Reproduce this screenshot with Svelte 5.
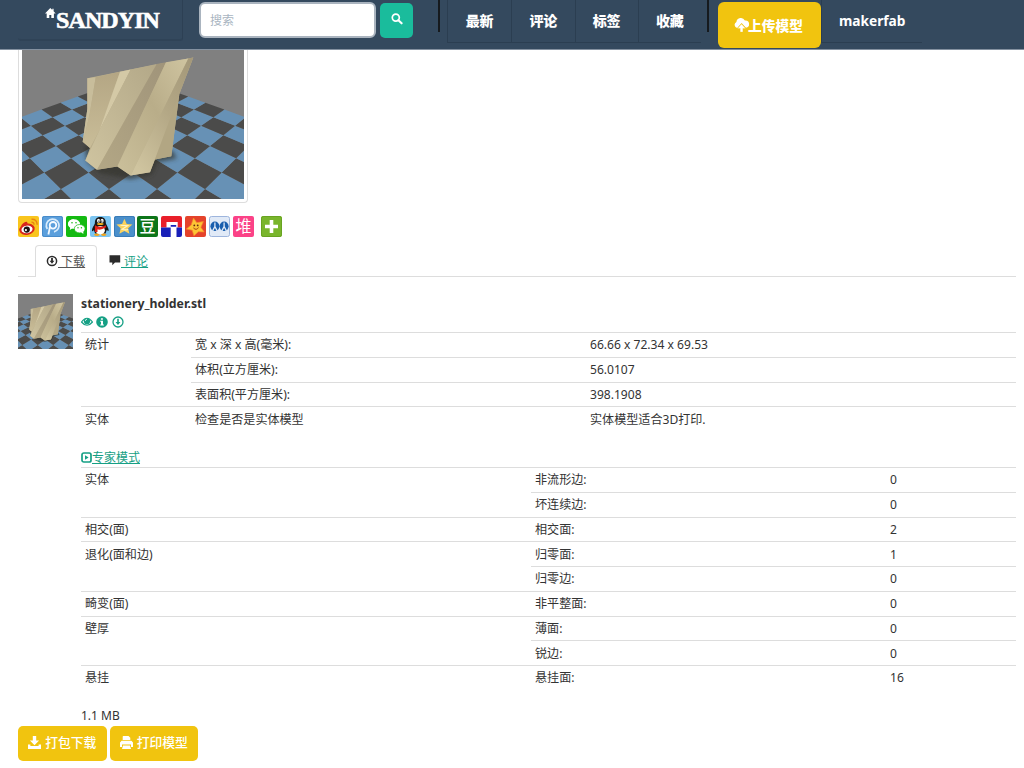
<script>
  const nav = ['最新', '评论', '标签', '收藏'];

  const stats = [
    { label: '统计', rows: [['宽 x 深 x 高(毫米):', '66.66 x 72.34 x 69.53'], ['体积(立方厘米):', '56.0107'], ['表面积(平方厘米):', '398.1908']] },
    { label: '实体', rows: [['检查是否是实体模型', '实体模型适合3D打印.']] }
  ];
  const expert = [
    { label: '实体', rows: [['非流形边:', '0'], ['坏连续边:', '0']] },
    { label: '相交(面)', rows: [['相交面:', '2']] },
    { label: '退化(面和边)', rows: [['归零面:', '1'], ['归零边:', '0']] },
    { label: '畸变(面)', rows: [['非平整面:', '0']] },
    { label: '壁厚', rows: [['薄面:', '0'], ['锐边:', '0']] },
    { label: '悬挂', rows: [['悬挂面:', '16']] }
  ];

  // Checkerboard floor in perspective: rows shrink towards the horizon.
  function project(i, j) {
    const n = i + j - 1;
    const s = 1 / (0.00694 + 0.000571 * n);
    return `${(399 + ((i - j) / 2) * s).toFixed(1)},${(-224 + 4.55 * s).toFixed(1)}`;
  }
  const tiles = [];
  for (let i = -5; i < 7; i++) {
    for (let j = -5; j < 7; j++) {
      if (i + j < -3) continue;
      tiles.push({
        dark: (i + j) % 2 !== 0,
        points: [project(i, j), project(i + 1, j), project(i + 1, j + 1), project(i, j + 1)].join(' ')
      });
    }
  }
</script>

{#snippet scene(viewBox, cls)}
  <svg class={cls} {viewBox} preserveAspectRatio="none">
    <defs>
      <linearGradient id="{cls}-a" x1="0" y1="0" x2="0" y2="1"><stop offset="0" stop-color="#b4a684" /><stop offset="1" stop-color="#c9bd98" /></linearGradient>
      <linearGradient id="{cls}-b" x1="1" y1="0" x2="0" y2="1"><stop offset="0" stop-color="#b3a888" /><stop offset="1" stop-color="#cfc4a0" /></linearGradient>
      <linearGradient id="{cls}-c" x1="1" y1="0" x2="0" y2="1"><stop offset="0" stop-color="#cfc4a0" /><stop offset=".45" stop-color="#b9ad89" /><stop offset="1" stop-color="#cbc09b" /></linearGradient>
      <linearGradient id="{cls}-d" x1="1" y1="0" x2="0" y2="1"><stop offset="0" stop-color="#a0947a" /><stop offset="1" stop-color="#b3a785" /></linearGradient>
      <linearGradient id="{cls}-e" x1=".9" y1="0" x2=".2" y2="1"><stop offset="0" stop-color="#a5997a" /><stop offset=".45" stop-color="#b3a785" /><stop offset="1" stop-color="#cfc49f" /></linearGradient>
      <filter id="{cls}-s"><feGaussianBlur stdDeviation="6" /></filter>
    </defs>
    <rect x="0" y="-60" width="800" height="560" fill="#808080" />
    {#each tiles as t}
      <polygon points={t.points} fill={t.dark ? '#4b4b4a' : '#6791b5'} />
    {/each}
    <polygon points="252,300 262,350 300,384 392,402 455,388 472,352 530,340 520,318" fill="#35352d" opacity=".7" filter="url(#{cls}-s)" />
    <polygon points="262,97 392,71 580,35 538,145 527,230 514,333 465,343 450,381 392,391 352,364 291,374 256,346 270,308 248,290 262,190" fill="#b9ad8a" />
    <polygon points="262,97 287,94 270,200 250,290 248,290 262,190" fill="#c8bd9b" />
    <polygon points="287,94 360,78 298,255 270,308 250,290 270,200" fill="url(#{cls}-a)" />
    <polygon points="360,78 392,71 298,255" fill="#d4c9a6" />
    <polygon points="392,71 470,54 291,374 256,346 298,255" fill="url(#{cls}-b)" />
    <polygon points="470,54 498,49 352,364 291,374" fill="url(#{cls}-d)" />
    <polygon points="498,49 565,38 392,391 352,364" fill="url(#{cls}-c)" />
    <polygon points="538,145 527,230 514,333 465,343 490,240" fill="#b2a683" />
    <polygon points="565,38 580,35 538,145 450,381 392,391" fill="url(#{cls}-e)" />
  </svg>
{/snippet}

{#snippet table(groups, cls)}
  <table class={cls}>
    <colgroup><col class="c1" /><col class="c2" /><col class="c3" /></colgroup>
    <tbody>
      {#each groups as g}
        {#each g.rows as r, k}
          <tr>
            {#if k === 0}<td rowspan={g.rows.length}>{g.label}</td>{/if}
            <td>{r[0]}</td>
            <td>{r[1]}</td>
          </tr>
        {/each}
      {/each}
    </tbody>
  </table>
{/snippet}

<header>
  <a class="logo" href="#home">
    <svg width="11" height="11" viewBox="0 0 11 11"><path fill="#fff" d="M5.3 0 0 5.4h1.7V10h2.6V7h2v3h2.6V5.4h1.8L8.6 3.2V.8H7.3v1.1z" /></svg>
    <span>SANDYIN</span>
  </a>
  <div class="search">搜索</div>
  <button class="go" aria-label="搜索">
    <svg width="12" height="12" viewBox="0 0 12 12"><circle cx="4.8" cy="4.6" r="3.5" fill="none" stroke="#fff" stroke-width="1.7" /><path d="M7.4 7.2 10.6 10.3" stroke="#fff" stroke-width="2.1" stroke-linecap="round" /></svg>
  </button>
  <i class="bar"></i>
  <nav>
    {#each nav as n}<a href="#nav">{n}</a>{/each}
  </nav>
  <i class="bar second"></i>
  <a class="upload" href="#upload">
    <svg width="15" height="15" viewBox="0 0 15 15"><path fill="#fff" d="M3.2 9.9A3.2 3.2 0 0 1 2.4 3.9 4.5 4.5 0 0 1 10.9 2.6 3.6 3.6 0 0 1 12 9.8L7.6 5z" /><path fill="#fff" d="M7.5 6 11.6 10.4H8.9V14H6.2v-3.6H3.5z" stroke="#f1c40f" stroke-width=".3" /></svg><span>上传模型</span>
  </a>
  <a class="user" href="#user">makerfab</a>
</header>

<main>
  <div class="frame">{@render scene('66 12 666 450', 'photo')}</div>

  <div class="share">
    <svg viewBox="0 0 21 21"><rect width="21" height="21" rx="2" fill="#f9c51d" /><ellipse cx="9" cy="13.2" rx="7.8" ry="5.6" fill="#d8271c" transform="rotate(-12 9 13.2)" /><path d="M3 10q2-4 6-4.200l1 3z" fill="#d8271c" /><ellipse cx="9" cy="13.4" rx="5.6" ry="3.8" fill="#fff" transform="rotate(-8 9 13.4)" /><circle cx="8.8" cy="13.6" r="3.1" fill="#1c1414" /><circle cx="7.9" cy="14.1" r="1.1" fill="#fff" /><path d="M13.500 6.200q2.500-.2 2.500 2.600M13.500 3.200q5.500-.3 5.700 5.600" fill="none" stroke="#e88412" stroke-width="1.400" /></svg>
    <svg viewBox="0 0 21 21"><rect width="21" height="21" rx="2" fill="#5b9fdc" /><rect x=".5" y=".5" width="20" height="20" rx="2" fill="none" stroke="#478bca" /><path d="M5.300 13A6.400 6.400 0 1 1 12 15.800" fill="none" stroke="#d8ecfc" stroke-width="1.700" /><circle cx="11" cy="9.300" r="3.300" fill="none" stroke="#f4faff" stroke-width="1.800" /><path d="M8 10.500 6.400 18.500" fill="none" stroke="#f4faff" stroke-width="1.800" /></svg>
    <svg viewBox="0 0 21 21"><rect width="21" height="21" rx="2" fill="#14ba12" /><path d="M8 3.2c-3.4 0-6 2-6 4.700 0 1.500.9 2.800 2.200 3.700L3.800 14l2.400-1.400H8z" fill="#fff" /><ellipse cx="8.100" cy="8" rx="6" ry="4.700" fill="#fff" /><ellipse cx="13.700" cy="12.700" rx="5.400" ry="4.200" fill="#fff" stroke="#14ba12" stroke-width=".7" /><path d="m15 16 2.300 2v-3z" fill="#fff" /><g fill="#14ba12"><circle cx="6" cy="6.800" r=".8" /><circle cx="10" cy="6.800" r=".8" /><circle cx="12" cy="11.700" r=".7" /><circle cx="15.400" cy="11.700" r=".7" /></g></svg>
    <svg viewBox="0 0 21 21"><rect width="21" height="21" rx="2" fill="#7cc5f1" /><path d="M10.300 1c-3.900 0-5.600 2.600-5.400 6.300-.8 2.500-3.300 5.200-2.900 7.600.6.700 1.700-.4 1.900-.8l1.200 3.400h10.400l1.200-3.400c.4.600 1.500 1.400 1.900.6.400-2.200-1.700-4.800-2.700-7.200.1-4-1.700-6.500-5.600-6.500z" fill="#181818" /><ellipse cx="10.300" cy="14.200" rx="4.600" ry="4.300" fill="#fff" /><path d="M4.900 9.200q5.300 3.200 10.900 0l.4 2.100q-5.700 3.200-8.700 2v2.800H4.900z" fill="#e22218" /><ellipse cx="8.500" cy="4.800" rx="1.500" ry="2" fill="#fff" /><ellipse cx="12.100" cy="4.800" rx="1.500" ry="2" fill="#fff" /><circle cx="8.900" cy="5.100" r=".7" /><circle cx="11.800" cy="5.100" r=".7" /><ellipse cx="10.300" cy="8.100" rx="3.300" ry="1" fill="#f8b41c" /><path d="M3.800 18.700q3-2.600 6 0-3 2.500-6 0zm7 0q2.900-2.600 5.900 0-2.800 2.500-5.900 0z" fill="#f4a51c" /></svg>
    <svg viewBox="0 0 21 21"><rect width="21" height="21" rx="2" fill="#4a8fcb" /><rect x=".5" y=".5" width="20" height="20" rx="2" fill="none" stroke="#397bb6" /><path d="m10.400 2.700 2.300 5.200 5.700.6-4.300 3.800 1.300 5.500-5-2.900-5 2.900 1.300-5.500-4.300-3.800 5.700-.6z" fill="#fbd25c" /><path d="m6.400 9.300 7.300.4-5.700 3.600q4 1 6.200.1" fill="none" stroke="#fff6cc" stroke-width="1.100" /></svg>
    <svg viewBox="0 0 21 21"><rect width="21" height="21" rx="2" fill="#0d751a" /><text x="10.5" y="16.200" font-size="16" font-weight="500" text-anchor="middle" fill="#fff">豆</text></svg>
    <svg viewBox="0 0 21 21"><rect width="21" height="21" rx="2" fill="#fff" /><path d="M2 0h17a2 2 0 0 1 2 2v9.500h-4.300V6H5.500v5.500H0V2a2 2 0 0 1 2-2z" fill="#e91f2a" /><path d="M0 11.500h9.700V21H2a2 2 0 0 1-2-2zM16.700 11.500H21V19a2 2 0 0 1-2 2h-3.500v-9.500zM9.700 9h5.500v1.700H9.700z" fill="#1920b8" /></svg>
    <svg viewBox="0 0 21 21"><rect width="21" height="21" rx="2" fill="#e4432b" /><path d="m8.500 2 3.200 4.600 6.700-1-2.500 5.700 3.200 4.600-5.700-.2L8.900 19.800l-1.700-5.600L1.300 13 6.200 8.900z" fill="#fdc535" stroke="#f6892a" stroke-width=".7" stroke-linejoin="round" /><circle cx="9.300" cy="9.400" r=".9" fill="#652c12" /><circle cx="12.700" cy="9.400" r=".9" fill="#652c12" /><path d="M8.400 11.900q3 3 5.100-.4" fill="none" stroke="#a54016" /></svg>
    <svg viewBox="0 0 21 21"><rect x=".5" y=".5" width="20" height="20" rx="2" fill="#e1eaf7" stroke="#9eb5dd" /><ellipse cx="5.900" cy="10.300" rx="4.500" ry="4.800" fill="#195ead" /><ellipse cx="15.100" cy="10.300" rx="4.500" ry="4.800" fill="#195ead" /><path d="m3.600 14.900 2.300-4.400V6.600m0 3.900 2.300 4.400M12.800 14.900l2.300-4.400V6.600m0 3.900 2.300 4.400" fill="none" stroke="#e1eaf7" stroke-width="1.300" /></svg>
    <svg viewBox="0 0 21 21"><rect width="21" height="21" rx="2" fill="#fb4287" /><text x="10.5" y="16.200" font-size="16" text-anchor="middle" fill="#fff">堆</text></svg>
    <svg class="more" viewBox="0 0 21 21"><rect width="21" height="21" rx="2" fill="#79b52c" /><rect x=".5" y=".5" width="20" height="20" rx="2" fill="none" stroke="#68a321" /><path d="M10.500 4v13M4 10.500h13" stroke="#fff" stroke-width="3.600" /></svg>
  </div>

  <div class="tabs">
    <a class="tab on" href="#download"><svg width="12" height="12" viewBox="0 0 12 12"><circle cx="6" cy="6" r="4.600" fill="none" stroke="#2b2b2b" stroke-width="1.500" /><path d="M5.100 3h1.800v2.800h1.500L6 8.800 3.600 5.800h1.500z" fill="#2b2b2b" /></svg><span>&nbsp;下载</span></a>
    <a class="tab" href="#comments"><svg width="12" height="12" viewBox="0 0 12 12"><path d="M.5 1.300h10.700v7.200H6L3.300 11.200V8.500H.5z" fill="#2b2b2b" /></svg><span>&nbsp;评论</span></a>
  </div>

  <section class="file">
    {@render scene('143 -42 512 512', 'thumb')}
    <div class="info">
      <h4>stationery_holder.stl</h4>
      <div class="acts">
        <svg width="12" height="12" viewBox="0 0 12 12"><path d="M.5 6Q6-1.500 11.500 6 6 12.500.5 6z" fill="none" stroke="#16a085" stroke-width="1.200" /><circle cx="6" cy="5.200" r="3.100" fill="#16a085" /><path d="M4.400 4.900q0-1.600 1.600-1.700" fill="none" stroke="#fff" stroke-width=".8" /></svg>
        <svg width="12" height="12" viewBox="0 0 12 12"><circle cx="6" cy="6" r="5.800" fill="#16a085" /><path d="M4.900 2.200h2v1.500h-2zM4.200 4.700H7v3.700h.9v1.100H4.200V8.400H5V5.800h-.8z" fill="#fff" /></svg>
        <svg width="12" height="12" viewBox="0 0 12 12"><circle cx="6" cy="6" r="5" fill="none" stroke="#16a085" stroke-width="1.300" /><path d="M5.200 2.800h1.600v3.100h1.600L6 9 3.600 5.900h1.600z" fill="#16a085" /></svg>
      </div>
      {@render table(stats, 'stats')}
      <a class="mode" href="#expert"><svg width="11" height="11" viewBox="0 0 11 11"><rect x="1" y="1" width="9" height="9" rx="1.800" fill="none" stroke="#16a085" stroke-width="1.700" /><path d="M4 3.200 7.600 5.500 4 7.800z" fill="#16a085" /></svg><span>专家模式</span></a>
      {@render table(expert, 'expert')}
      <div class="size">1.1 MB</div>
    </div>
  </section>

  <div class="buttons">
    <a href="#zip"><svg width="13" height="13" viewBox="0 0 13 13"><path d="M4.800 0h3.400v4.600h2.900L6.500 9.200 1.900 4.600h2.900zM0 8.500h2.400v1.600h8.200V8.500H13V13H0z" fill="#fff" /></svg><span>打包下载</span></a>
    <a href="#print"><svg width="13" height="13" viewBox="0 0 13 13"><path d="M3.300 0h5.200l1.800 1.800V4H2.700V.6zM1.600 4.800h9.800L13 6.400V11h-2V8.500H2V11H0V6.400zM3 9.400h7L11 13H2z" fill="#fff" /></svg><span>打印模型</span></a>
  </div>
</main>

<style>
  :global(body) {
    background: #fff;
    color: #333;
    font: 12px/17px 'Noto Sans', 'Noto Sans CJK SC', sans-serif;
    overflow: hidden;
  }
  a { color: inherit; text-decoration: none; }
  svg { display: block; flex: none; }
  header {
    box-sizing: border-box;
    height: 50px;
    display: flex;
    align-items: flex-start;
    padding-left: 18px;
    background: #34495e;
    border-bottom: 1px solid #8491a0;
    color: #fff;
    font-weight: 700;
  }
  .logo {
    box-sizing: border-box;
    width: 165px;
    height: 41px;
    display: flex;
    padding: 8px 0 0 27px;
    border-right: 1px solid #2d4054;
    border-bottom: 2px solid #2f4357;
    border-radius: 0 0 3px 3px;
  }
  .logo span {
    font: 700 24px/24px 'Liberation Serif', serif;
    letter-spacing: -.9px;
    -webkit-text-stroke: .6px #fff;
  }
  .search {
    box-sizing: border-box;
    width: 177px;
    height: 36px;
    margin: 2px 4px 0 16px;
    padding: 0 9px;
    border: 2px solid #aab4bf;
    border-radius: 6px;
    background: #fff;
    color: #a9b5c1;
    font-weight: 400;
    line-height: 34px;
  }
  .go {
    width: 33px;
    height: 35px;
    margin: 2.5px 25px 0 0;
    padding: 0 0 2px 11px;
    border: 0;
    border-radius: 5px;
    background: #1abc9c;
  }
  .bar { width: 2px; height: 32px; background: #161a1e; margin-right: 7px; }
  .bar.second { margin: 0 9px 0 6px; }
  nav {
    display: flex;
    height: 42px;
    border-bottom: 1px solid #2b3e51;
    border-left: 1px solid #2b3e51;
  }
  nav a {
    box-sizing: border-box;
    width: 63.25px;
    text-align: center;
    font-size: 14px;
    font-weight: 900;
    line-height: 41px;
    border-left: 1px solid #2b3e51;
  }
  nav a:first-child { border-left: 0; }
  .upload {
    box-sizing: border-box;
    width: 103px;
    height: 46px;
    margin-top: 2px;
    display: flex;
    justify-content: center;
    align-items: center;
    padding: 1px 2px 0 0;
    border-radius: 6px;
    background: #f1c40f;
    font-size: 13.7px;
    font-weight: 900;
  }
  .upload svg { margin-right: -1px; }
  .user {
    box-sizing: border-box;
    width: 101px;
    height: 43px;
    padding-left: 17px;
    border-left: 1px solid #2b3e51;
    border-bottom: 1px solid #2b3e51;
    font-size: 13.7px;
    line-height: 41px;
  }
  main { padding: 0 8px 0 18px; }
  .frame {
    box-sizing: border-box;
    width: 230px;
    height: 153px;
    padding: 0 3px 3px;
    border: 1px solid #ddd;
    border-top: 0;
    border-radius: 0 0 4px 4px;
  }
  .photo { width: 222px; height: 149px; }
  .share { display: flex; gap: 2.9px; margin-top: 13px; font-family: 'Noto Sans CJK SC', sans-serif; }
  .share svg { width: 21px; height: 21px; overflow: visible; }
  .share .more { margin-left: 4px; }
  .tabs {
    display: flex;
    height: 31px;
    margin-top: 8px;
    padding-left: 17px;
    border-bottom: 1px solid #ddd;
  }
  .tab { display: flex; align-items: center; color: #16a085; padding: 1px 0 0 12px; }
  .tab span { text-decoration: underline; }
  .tab svg { margin-top: -2px; }
  .tab.on {
    box-sizing: border-box;
    width: 62px;
    height: 32px;
    padding: 0 0 0 10px;
    color: #555;
    background: #fff;
    border: 1px solid #ddd;
    border-bottom: 0;
    border-radius: 4px 4px 0 0;
  }
  .file { display: flex; gap: 8px; margin-top: 17px; }
  .thumb { width: 55px; height: 55px; }
  .info { flex: 1; height: 431.5px; }
  h4 { margin: 0; font-size: 12.300px; line-height: 19px; }
  .acts { display: flex; gap: 3.3px; height: 16px; margin-top: 3px; }
  table {
    width: 935px;
    table-layout: fixed;
    border-spacing: 0;
    border-collapse: separate;
  }
  td {
    box-sizing: border-box;
    height: 24.75px;
    padding: 3.4px 4px 3.35px;
    border-top: 1px solid #ddd;
    font-size: 12.080px;
    line-height: 17px;
    vertical-align: top;
  }
  .stats .c1 { width: 110px; }
  .stats .c2 { width: 395px; }
  .expert .c1 { width: 450px; }
  .expert .c2 { width: 355px; }
  .mode {
    display: flex;
    align-items: center;
    height: 19px;
    margin-top: 17px;
    color: #16a085;
  }
  .mode span { text-decoration: underline; }
  .size { margin-top: 17px; }
  .buttons { display: flex; gap: 3px; }
  .buttons a {
    box-sizing: border-box;
    width: 88.5px;
    height: 35px;
    display: flex;
    align-items: center;
    justify-content: center;
    gap: 4px;
    padding-bottom: 1px;
    border-radius: 5px;
    background: #f1c40f;
    color: #fff;
    font-size: 12.800px;
    font-weight: 500;
  }
</style>
